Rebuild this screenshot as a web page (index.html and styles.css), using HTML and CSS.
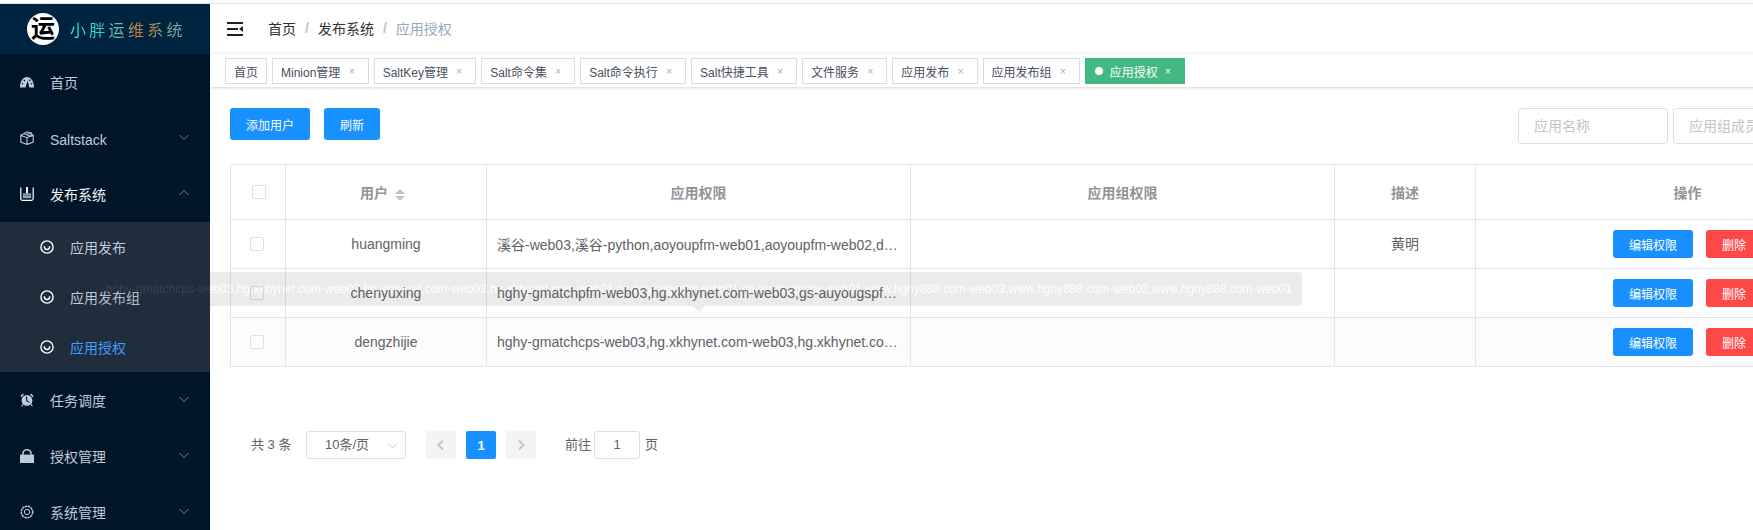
FILE: index.html
```html
<!DOCTYPE html>
<html lang="zh-CN">
<head>
  <meta charset="UTF-8">
  <title>应用授权</title>
  <link rel="stylesheet" href="styles.css">
</head>
<body>
  <div class="app">
    <!-- 侧边栏 -->
    <aside class="sidebar">
      <div class="logo">
        <span class="logo-mark">运</span>
        <span class="logo-title">小胖运维系统</span>
      </div>
      <ul class="menu">
        <li class="menu-item">
          <svg class="menu-icon" viewBox="0 0 14 14"><path fill="currentColor" d="M0 12.4C0 6.4 3 2 7 2s7 4.4 7 10.4H9.4L8.6 9.6 7.8 5.6 6.4 9.4 5.4 12.4z"/><circle cx="2.6" cy="8.8" r=".8" fill="#001528"/><circle cx="4.4" cy="5.6" r=".8" fill="#001528"/><circle cx="11.4" cy="8.8" r=".8" fill="#001528"/><circle cx="9.8" cy="5.4" r=".8" fill="#001528"/></svg>
          <span>首页</span>
        </li>
        <li class="menu-item">
          <svg class="menu-icon" viewBox="0 0 14 14"><path fill="none" stroke="currentColor" stroke-width="1.1" d="M.8 4.4 7 6.6v6.8L.8 11zM7 6.6l6.2-2.2v6.6L7 13.4M.8 4.4 7 .8l6.2 3.6M4 2.6l6 2.6"/><circle cx="9.8" cy="3.2" r="2" fill="none" stroke="currentColor"/></svg>
          <span class="latin">Saltstack</span>
          <svg class="menu-arrow" viewBox="0 0 12 12"><path d="M1.5 4 6 8.5 10.5 4"/></svg>
        </li>
        <li class="menu-item open">
          <svg class="menu-icon" viewBox="0 0 14 14"><path fill="none" stroke="#fff" stroke-width="1.2" d="M.8 .6v11a1.8 1.8 0 0 0 1.8 1.8h8.8a1.8 1.8 0 0 0 1.8-1.8V.6"/><path fill="#fff" d="M6 0h2v6.4H6z"/><path fill="#98a2ae" d="M2.8 6.4h8.4v4.8H2.8z"/><path fill="#4a5564" d="M2.8 8.2h8.4v.6H2.8z"/></svg>
          <span>发布系统</span>
          <svg class="menu-arrow" viewBox="0 0 12 12"><path d="M1.5 8 6 3.5 10.5 8"/></svg>
        </li>
        <li class="submenu">
          <div class="submenu-item">
            <svg class="smile" viewBox="0 0 14 14"><circle cx="7" cy="7" r="6.1"/><path d="M4.3 6.2c0 4.4 5.4 4.4 5.4 0"/></svg>
            <span>应用发布</span>
          </div>
          <div class="submenu-item">
            <svg class="smile" viewBox="0 0 14 14"><circle cx="7" cy="7" r="6.1"/><path d="M4.3 6.2c0 4.4 5.4 4.4 5.4 0"/></svg>
            <span>应用发布组</span>
          </div>
          <div class="submenu-item active">
            <svg class="smile" viewBox="0 0 14 14"><circle cx="7" cy="7" r="6.1"/><path d="M4.3 6.2c0 4.4 5.4 4.4 5.4 0"/></svg>
            <span>应用授权</span>
          </div>
        </li>
        <li class="menu-item">
          <svg class="menu-icon" viewBox="0 0 14 14"><circle cx="7" cy="7.4" r="5.4" fill="currentColor"/><path fill="currentColor" d="M.4 3 3 .6 4 1.6 1.4 4.2zM13.6 3 11 .6 10 1.6 12.6 4.2zM2.6 11 1.2 13l.8.6 1.6-1.8zM11.4 11l1.4 2-.8.6-1.6-1.8z"/><path fill="none" stroke="#001528" stroke-width="1.1" d="M6.6 3.6v4l2.8 1.8"/></svg>
          <span>任务调度</span>
          <svg class="menu-arrow" viewBox="0 0 12 12"><path d="M1.5 4 6 8.5 10.5 4"/></svg>
        </li>
        <li class="menu-item">
          <svg class="menu-icon" viewBox="0 0 14 14"><path fill="currentColor" d="M0 5.6h14V14H0z"/><path fill="none" stroke="currentColor" stroke-width="1.6" d="M3 5.8V4.2a4 3.4 0 0 1 8 0v1.6"/></svg>
          <span>授权管理</span>
          <svg class="menu-arrow" viewBox="0 0 12 12"><path d="M1.5 4 6 8.5 10.5 4"/></svg>
        </li>
        <li class="menu-item">
          <svg class="menu-icon" viewBox="0 0 14 14"><circle cx="7" cy="7" r="2.7" fill="none" stroke="currentColor"/><circle cx="7" cy="7" r="5.7" fill="none" stroke="currentColor" stroke-width="1.5" stroke-dasharray="2.4 .6"/></svg>
          <span>系统管理</span>
          <svg class="menu-arrow" viewBox="0 0 12 12"><path d="M1.5 4 6 8.5 10.5 4"/></svg>
        </li>
      </ul>
    </aside>

    <div class="main">
      <div class="navbar">
        <svg class="hamburger" viewBox="0 0 16 14"><path d="M0 0h16v2H0zM0 6h11v2H0zM0 12h16v2H0z"/><path d="M16 4v6l-4-3z"/></svg>
        <span class="crumb">首页</span>
        <span class="crumb-sep">/</span>
        <span class="crumb">发布系统</span>
        <span class="crumb-sep">/</span>
        <span class="crumb current">应用授权</span>
      </div>

      <div class="tags">
        <span class="tag">首页</span>
        <span class="tag">Minion管理<i class="tag-close">×</i></span>
        <span class="tag">SaltKey管理<i class="tag-close">×</i></span>
        <span class="tag">Salt命令集<i class="tag-close">×</i></span>
        <span class="tag">Salt命令执行<i class="tag-close">×</i></span>
        <span class="tag">Salt快捷工具<i class="tag-close">×</i></span>
        <span class="tag">文件服务<i class="tag-close">×</i></span>
        <span class="tag">应用发布<i class="tag-close">×</i></span>
        <span class="tag">应用发布组<i class="tag-close">×</i></span>
        <span class="tag active"><b class="tag-dot"></b>应用授权<i class="tag-close">×</i></span>
      </div>

      <div class="content">
        <div class="toolbar">
          <div class="toolbar-left">
            <button class="btn primary wide">添加用户</button>
            <button class="btn primary">刷新</button>
          </div>
          <div class="filters">
            <div class="text-input placeholder">应用名称</div>
            <div class="text-input placeholder">应用组成员</div>
          </div>
        </div>

        <table class="grid">
          <colgroup>
            <col class="col-check">
            <col class="col-user">
            <col class="col-wide">
            <col class="col-wide">
            <col class="col-desc">
            <col>
          </colgroup>
          <thead>
            <tr>
              <th><span class="checkbox head"></span></th>
              <th>用户<span class="sort"><i class="up"></i><i class="down"></i></span></th>
              <th>应用权限</th>
              <th>应用组权限</th>
              <th>描述</th>
              <th>操作</th>
            </tr>
          </thead>
          <tbody>
            <tr>
              <td class="center"><span class="checkbox"></span></td>
              <td class="center">huangming</td>
              <td><div class="ellipsis">溪谷-web03,溪谷-python,aoyoupfm-web01,aoyoupfm-web02,dzfm-web01,dzfm-web02</div></td>
              <td></td>
              <td class="center cjk">黄明</td>
              <td><div class="actions"><button class="btn small primary wide">编辑权限</button><button class="btn small danger">删除</button></div></td>
            </tr>
            <tr>
              <td class="center"><span class="checkbox"></span></td>
              <td class="center">chenyuxing</td>
              <td><div class="ellipsis">hghy-gmatchpfm-web03,hg.xkhynet.com-web03,gs-auyougspfm-web01,gs-auyougscps-web01</div></td>
              <td></td>
              <td></td>
              <td><div class="actions"><button class="btn small primary wide">编辑权限</button><button class="btn small danger">删除</button></div></td>
            </tr>
            <tr class="striped">
              <td class="center"><span class="checkbox"></span></td>
              <td class="center">dengzhijie</td>
              <td><div class="ellipsis">hghy-gmatchcps-web03,hg.xkhynet.com-web03,hg.xkhynet.com-web02,hg.xkhynet.com-web01</div></td>
              <td></td>
              <td></td>
              <td><div class="actions"><button class="btn small primary wide">编辑权限</button><button class="btn small danger">删除</button></div></td>
            </tr>
          </tbody>
        </table>

        <div class="pager">
          <span class="pager-total">共 3 条</span>
          <div class="pager-size">10条/页
            <svg viewBox="0 0 12 12"><path d="M1.5 4 6 8.5 10.5 4"/></svg>
          </div>
          <span class="page-btn disabled"><svg viewBox="0 0 12 12"><path d="M8 1.5 3.5 6 8 10.5"/></svg></span>
          <span class="page-btn current">1</span>
          <span class="page-btn disabled"><svg viewBox="0 0 12 12"><path d="M4 1.5 8.5 6 4 10.5"/></svg></span>
          <span class="pager-jump">前往</span>
          <span class="pager-input">1</span>
          <span class="pager-unit">页</span>
        </div>
      </div>
    </div>
  </div>

  <!-- 正在淡入的提示框 -->
  <div class="tooltip">hghy-gmatchcps-web03,hg.xkhynet.com-web03,hg.xkhynet.com-web02,hg.xkhynet.com-web01,gs-auyougspfm-web01,gs-auyougscps-web01,www.hghy888.com-web03,www.hghy888.com-web02,www.hghy888.com-web01<span class="tooltip-arrow"></span></div>
</body>
</html>
```

FILE: styles.css
```css
* { box-sizing: border-box; }
html, body { margin: 0; height: 100%; overflow: hidden; background: #fff; }
body { font-family: "Liberation Sans", "Noto Sans CJK SC", sans-serif; font-size: 14px; color: #606266; padding-top: 3px; }
ul { list-style: none; margin: 0; padding: 0; }
i { font-style: normal; }

.app { display: flex; width: 1920px; height: 527px; border-top: 1px solid #dfe1e6; }

/* sidebar */
.sidebar { flex: 0 0 210px; background: #001528; color: #bfcbd9; overflow: hidden; }
.logo { height: 50px; background: #00233f; display: flex; align-items: center; padding-left: 27px; }
.logo-mark { width: 32px; height: 32px; border-radius: 50%; background: #fff; color: #000; font-size: 24px; font-weight: 700; line-height: 32px; text-align: center; }
.logo-title {
  margin-left: 11px;
  font-size: 16px;
  letter-spacing: 3.3px;
  background: linear-gradient(90deg, #2ff0f0 0%, #3cc8c0 30%, #8ab8a0 48%, #c87a40 58%, #c87a40 66%, #9a9a78 78%, #58c0c0 100%);
  -webkit-background-clip: text;
  background-clip: text;
  color: transparent;
}
.menu-item { height: 56px; display: flex; align-items: center; padding-left: 20px; position: relative; }
.menu-item.open { color: #f4f4f5; }
.menu-icon { width: 14px; height: 14px; margin-right: 16px; flex: none; }
.menu-arrow { position: absolute; left: 178px; top: 21px; width: 12px; height: 12px; fill: none; stroke: #7a8794; stroke-width: 1; }
.latin { padding-top: 4px; }
.submenu { background: #1f2d3d; }
.submenu-item { height: 50px; display: flex; align-items: center; padding-left: 40px; }
.submenu-item.active { color: #409eff; }
.smile { width: 14px; height: 14px; margin-right: 16px; fill: none; stroke: #fff; stroke-width: 1.4; }

/* top bar */
.main { flex: 0 0 1710px; min-width: 0; }
.navbar { height: 50px; display: flex; align-items: center; padding: 0 0 1px 17px; }
.hamburger { width: 16px; height: 14px; margin-right: 25px; fill: #222; }
.crumb { color: #303133; padding-bottom: 2px; }
.crumb.current { color: #97a8be; }
.crumb-sep { color: #c0c4cc; margin: 0 9px; font-weight: 700; padding-bottom: 2px; }

.tags { height: 33px; display: flex; align-items: center; padding: 1px 0 0 15px; gap: 5px; box-shadow: 0 -1px 3px rgba(0, 0, 0, .06), 0 1px 3px rgba(0, 0, 0, .16); }
.tag { height: 26px; display: flex; align-items: center; padding: 0 8px; border: 1px solid #d8dce5; color: #495060; font-size: 12px; white-space: nowrap; background: #fff; }
.tag.active { background: #42b983; border-color: #42b983; color: #fff; }
.tag-close { width: 16px; margin-left: 3.25px; text-align: center; color: #a8acb4; font-size: 10px; }
.tag.active .tag-close { color: #fff; margin-left: 2px; }
.tag-dot { width: 8px; height: 8px; border-radius: 50%; background: #fff; margin: 0 7px 0 1px; }

/* content */
.content { padding: 21px 20px 0; }
.toolbar { display: flex; justify-content: space-between; align-items: flex-start; height: 56px; }
.toolbar-left { display: flex; gap: 14px; }
.btn { border: 0; height: 32px; width: 56px; border-radius: 3px; font: inherit; font-size: 12px; color: #fff; padding: 0; }
.btn.wide { width: 80px; }
.btn.small { height: 28px; }
.primary { background: #1890ff; }
.danger { background: #ff4949; }
.filters { display: flex; gap: 5px; margin-right: 77px; }
.text-input { width: 150px; height: 36px; border: 1px solid #dcdfe6; border-radius: 4px; padding-left: 15px; line-height: 34px; }
.placeholder { color: #c0c4cc; }

.grid { width: 1670px; table-layout: fixed; border-collapse: collapse; }
.col-check { width: 55px; }
.col-user { width: 201px; }
.col-wide { width: 424px; }
.col-desc { width: 141px; }
.grid th, .grid td { border: 1px solid #dfe6ec; padding: 0 10px; }
.grid th { height: 55px; text-align: center; color: #909399; font-weight: 700; }
.grid td { height: 49px; }
.grid td.center { text-align: center; }
.grid td.cjk { padding-bottom: 3px; }
.striped td { background: #fcfcfc; }
.ellipsis { white-space: nowrap; overflow: hidden; text-overflow: ellipsis; }
.actions { display: flex; justify-content: center; gap: 13px; }
.checkbox { display: block; width: 14px; height: 14px; border: 1px solid #dcdfe6; border-radius: 2px; background: #fff; margin-left: 9px; }
.checkbox.head { margin-left: 11px; }
.sort { display: inline-flex; flex-direction: column; gap: 2px; width: 24px; padding-left: 7px; vertical-align: 4px; }
.sort i { width: 0; height: 0; border: 5px solid transparent; }
.sort .up { border-top: 0; border-bottom: 5px solid #c0c4cc; }
.sort .down { border-bottom: 0; border-top: 5px solid #c0c4cc; }

/* pager */
.pager { display: flex; align-items: center; height: 28px; margin-top: 64px; padding-left: 21px; font-size: 13px; }
.pager-total { width: 55px; padding-bottom: 3px; }
.pager-size { width: 100px; height: 28px; border: 1px solid #dcdfe6; border-radius: 3px; line-height: 26px; padding-left: 18px; position: relative; margin-right: 20px; }
.pager-size svg { position: absolute; right: 7px; top: 8px; width: 11px; height: 11px; fill: none; stroke: #c0c4cc; }
.page-btn { width: 30px; height: 28px; border-radius: 2px; margin-right: 10px; display: flex; align-items: center; justify-content: center; }
.page-btn svg { width: 12px; height: 12px; fill: none; stroke: #c0c4cc; stroke-width: 2; }
.page-btn.disabled { background: #f4f4f5; }
.page-btn.current { background: #1890ff; color: #fff; font-weight: 700; }
.pager-jump { margin-left: 19px; margin-right: 3px; padding-bottom: 3px; }
.pager-input { width: 46px; height: 28px; border: 1px solid #dcdfe6; border-radius: 3px; text-align: center; line-height: 26px; }
.pager-unit { margin-left: 5px; padding-bottom: 3px; }

/* tooltip, caught mid fade-in */
.tooltip { position: absolute; left: 96px; top: 272px; height: 34px; padding: 10px; background: #303133; color: #fff; font-size: 12px; line-height: 14px; white-space: nowrap; border-radius: 4px; opacity: .09; }
.tooltip-arrow { position: absolute; left: 597px; top: 34px; width: 0; height: 0; border: 6px solid transparent; border-bottom: 0; border-top-color: #303133; }
```
